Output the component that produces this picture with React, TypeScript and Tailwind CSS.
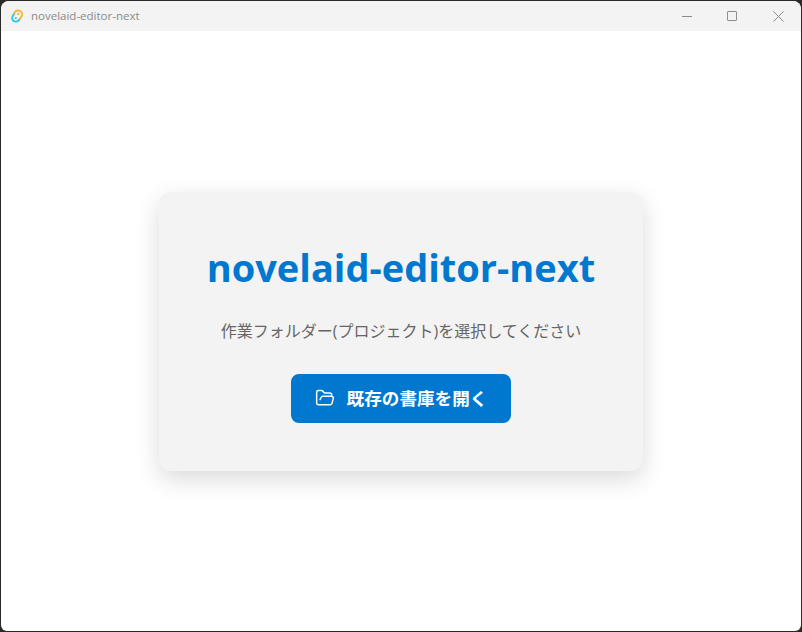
import React from "react";
import { FolderOpen } from "lucide-react";

const uiFont = "[font-family:'Open_Sans','Noto_Sans_CJK_JP',sans-serif]";

const TitleBar = () => {
  return (
    <div className="flex h-[30px] shrink-0 items-center justify-between bg-[#f3f3f3]">
      <div className="flex items-center">
        {/* Logo */}
        <svg viewBox="0 0 14 14" className="ml-[9px] h-[14px] w-[14px]" fill="none">
          <path d="M8.6 1.6a3.7 3.7 0 0 1 3.2 5.4L9.4 10.6" stroke="#f5b83d" strokeWidth="1.9" strokeLinecap="round" />
          <path d="M4.4 4.2 2.6 7.2a3.6 3.6 0 0 0 3 5.4 3.7 3.7 0 0 0 3.6-1.9" stroke="#2ec5ea" strokeWidth="1.9" strokeLinecap="round" />
          <path d="M4.4 4.2A3.8 3.8 0 0 1 8.6 1.6" stroke="#f5b83d" strokeWidth="1.9" strokeLinecap="round" />
          <circle cx="8.3" cy="5" r="1.1" fill="#f5a83d" />
          <circle cx="5.8" cy="9" r="1.1" fill="#2ec5ea" />
        </svg>
        <span className="ml-[7px] text-[11.5px] leading-none text-[#8a8a8a]">novelaid-editor-next</span>
      </div>
      <div className="flex h-full items-center">
        <button className="flex h-full w-[46px] items-center justify-center pl-px">
          <span className="h-px w-[10px] bg-[#8c8c8c]" />
        </button>
        <button className="flex h-full w-[46px] items-center justify-center">
          <span className="h-[10px] w-[10px] rounded-[1px] border border-[#8c8c8c]" />
        </button>
        <button className="flex h-full w-[46px] items-center justify-center">
          <svg viewBox="0 0 11 11" className="h-[11px] w-[11px]" stroke="#8c8c8c" strokeWidth="1">
            <path d="M.5.5l10 10M10.5.5l-10 10" />
          </svg>
        </button>
      </div>
    </div>
  );
};

const App = () => {
  return (
    <div className="h-[632px] w-[802px] overflow-hidden bg-[#2a2a2a] p-px">
      <div className={`flex h-full w-full flex-col overflow-hidden rounded-t-lg rounded-b-md bg-white ${uiFont}`}>
        <TitleBar />
        {/* Welcome card */}
        <div className="flex flex-1 items-center justify-center">
          <div className="flex h-[279px] w-[484px] flex-col items-center rounded-xl bg-[#f3f3f3] pt-[47px] shadow-[0_8px_24px_rgba(0,0,0,0.15)]">
            <h1 className="text-[38px] leading-[56px] font-bold text-[#0078d0]">novelaid-editor-next</h1>
            <p className="mt-[24px] text-base leading-[24px] text-[#666666]">
              作業フォルダー(プロジェクト)を選択してください
            </p>
            <button className="mt-[31px] flex h-[49px] w-[220px] items-center justify-center gap-3 rounded-lg bg-[#0078d0] text-[17.6px] font-semibold text-white">
              <FolderOpen className="h-5 w-5" strokeWidth={1.75} />
              既存の書庫を開く
            </button>
          </div>
        </div>
      </div>
    </div>
  );
};

export default App;
